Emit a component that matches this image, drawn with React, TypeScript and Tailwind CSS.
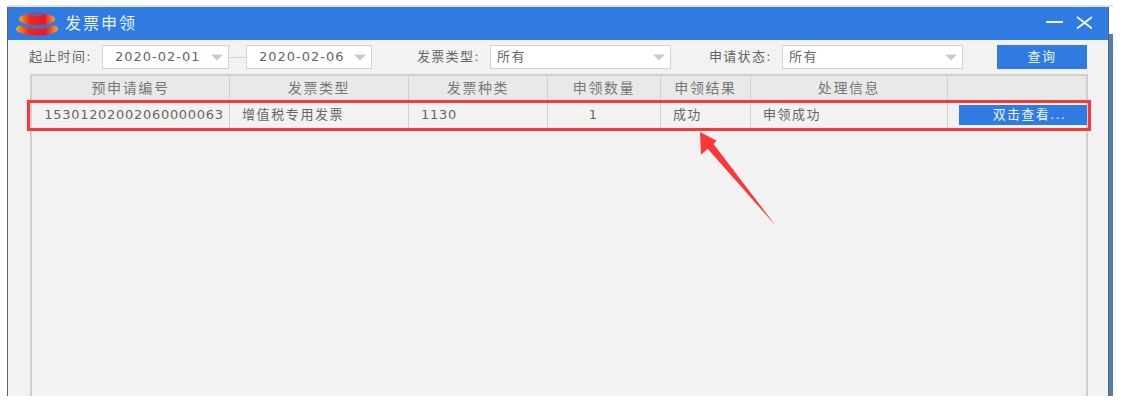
import React from "react";

const font = "font-['DejaVu_Sans','Noto_Sans_CJK_SC',sans-serif]";

const columns = [
	{ title: "预申请编号", value: "15301202002060000063", cell: "justify-center pl-[7px] tracking-[0.7px]" },
	{ title: "发票类型", value: "增值税专用发票", cell: "pl-3 tracking-[1.6px]" },
	{ title: "发票种类", value: "1130", cell: "pl-3 tracking-[0.7px]" },
	{ title: "申领数量", value: "1", cell: "justify-center pr-[22px]" },
	{ title: "申领结果", value: "成功", cell: "pl-3 tracking-[1.3px]" },
	{ title: "处理信息", value: "申领成功", cell: "pl-3 tracking-[1.5px]" },
];

const Caret = () => (
	<svg width="12" height="7" viewBox="0 0 12 7" className="shrink-0">
		<path d="M0 0.5h12L6 6.5z" fill="#c9c9c9" />
	</svg>
);

const Select: React.FC<{ value: string; className: string; date?: boolean }> = ({ value, className, date }) => (
	<div
		className={`flex h-6 items-center justify-between border border-[#d2d2d2] bg-white pr-[5px] text-[13px] text-[#666] ${className} ${
			date ? "pl-3 tracking-[1px]" : "pl-[6px] tracking-[1.5px]"
		}`}
	>
		<span>{value}</span>
		<Caret />
	</div>
);

const Logo = () => (
	<svg width="44" height="24" viewBox="0 0 44 24">
		<defs>
			<linearGradient id="logoFill" x1="0" x2="1" y1="0" y2="0">
				<stop offset="0" stopColor="#f7a81c" />
				<stop offset="0.3" stopColor="#ec2b1e" />
				<stop offset="0.7" stopColor="#e8142a" />
				<stop offset="1" stopColor="#f7a81c" />
			</linearGradient>
		</defs>
		<ellipse cx="22" cy="17" rx="21" ry="6.5" fill="url(#logoFill)" />
		<ellipse cx="22" cy="13" rx="17" ry="4" fill="#2f7be2" opacity="0.75" />
		<ellipse cx="22" cy="7" rx="18" ry="6" fill="url(#logoFill)" />
		<path d="M8 3.5C14 1 19 3 22 5c3-2 8-4 14-1.500C31 1 13 1 8 3.500z" fill="#2f7be2" opacity="0.8" />
	</svg>
);

const Arrow = () => (
	<svg width="90" height="100" viewBox="0 0 90 100" className="absolute left-[690px] top-[130px]">
		<path d="M10 2L26.700 10.700L23.500 14L86 96L17.700 18.700L11 24.700z" fill="#fb3838" />
	</svg>
);

export default function App() {
	return (
		<div className={`relative h-[406px] w-[1124px] overflow-hidden bg-white pl-[7px] pt-[5px] ${font}`}>
			<div className="flex h-[391px] w-[1106px] border-t-2 border-[#e4e4e4]">
				<div className="flex w-[1102px] flex-col border-x border-x-[#5f6468] bg-[#f2f2f2]">
					{/* Title bar */}
					<div className="flex h-[33px] shrink-0 items-center bg-[#2f7be2] pl-[7px] pr-[16px]">
						<Logo />
						<span className="ml-[6px] whitespace-nowrap text-[16px] tracking-[2px] text-[#eaf2fd]">发票申领</span>
						<svg width="46" height="14" viewBox="0 0 46 14" className="mb-[2px] ml-auto">
							<path d="M0 6h17M31 1l15 11.500M46 1L31 12.500" stroke="#eef5fd" strokeWidth="1.800" fill="none" />
						</svg>
					</div>

					{/* Filter row */}
					<div className="flex h-[34px] shrink-0 items-center whitespace-nowrap pl-[21px] text-[13px] text-[#666]">
						<span className="w-[73px] tracking-[1.3px]">起止时间:</span>
						<Select value="2020-02-01" date className="w-[127px]" />
						<div className="h-px w-[17px] bg-[#d2d2d2]" />
						<Select value="2020-02-06" date className="w-[126px]" />
						<span className="ml-[45px] w-[73px] tracking-[1.3px]">发票类型:</span>
						<Select value="所有" className="w-[181px]" />
						<span className="ml-[38px] w-[73px] tracking-[1.3px]">申请状态:</span>
						<Select value="所有" className="w-[181px]" />
						<button className="ml-[34px] h-6 w-[90px] bg-[#2f7be2] text-[13px] tracking-[1.5px] text-[#eaf2fd]">查询</button>
					</div>

					{/* Table */}
					<div className="ml-[22px] flex w-[1058px] flex-1 flex-col border-x-2 border-t-2 border-[#cfcfcf]">
						<div className="grid h-[26px] shrink-0 grid-cols-[198px_179px_139px_113px_90px_197px_1fr] border-b border-[#d4d4d4] bg-[#e9e9e9] text-[14px] tracking-[1.6px] text-[#777]">
							{columns.map((col) => (
								<div key={col.title} className="flex items-center justify-center whitespace-nowrap border-r border-[#d0d0d0]">
									{col.title}
								</div>
							))}
							<div />
						</div>
						<div className="grid h-[27px] shrink-0 grid-cols-[198px_179px_139px_113px_90px_197px_1fr] border-b border-[#d4d4d4] text-[13px] text-[#666]">
							{columns.map((col) => (
								<div key={col.title} className={`flex items-center whitespace-nowrap border-r border-[#d0d0d0] ${col.cell}`}>
									{col.value}
								</div>
							))}
							<div className="flex items-center justify-end">
								<button className="-mr-px h-[20px] w-[128px] bg-[#2f7be2] pl-[13px] text-[13px] tracking-[1.3px] text-[#eaf2fd]">双击查看...</button>
							</div>
						</div>
					</div>
				</div>
				<div className="mt-[27px] w-1 bg-[#4f7cb0]" />
			</div>

			{/* Annotation drawn over the screenshot */}
			<div className="absolute left-[27px] top-[100px] h-[31px] w-[1064px] border-[3px] border-[#fb3838]" />
			<Arrow />
		</div>
	);
}
